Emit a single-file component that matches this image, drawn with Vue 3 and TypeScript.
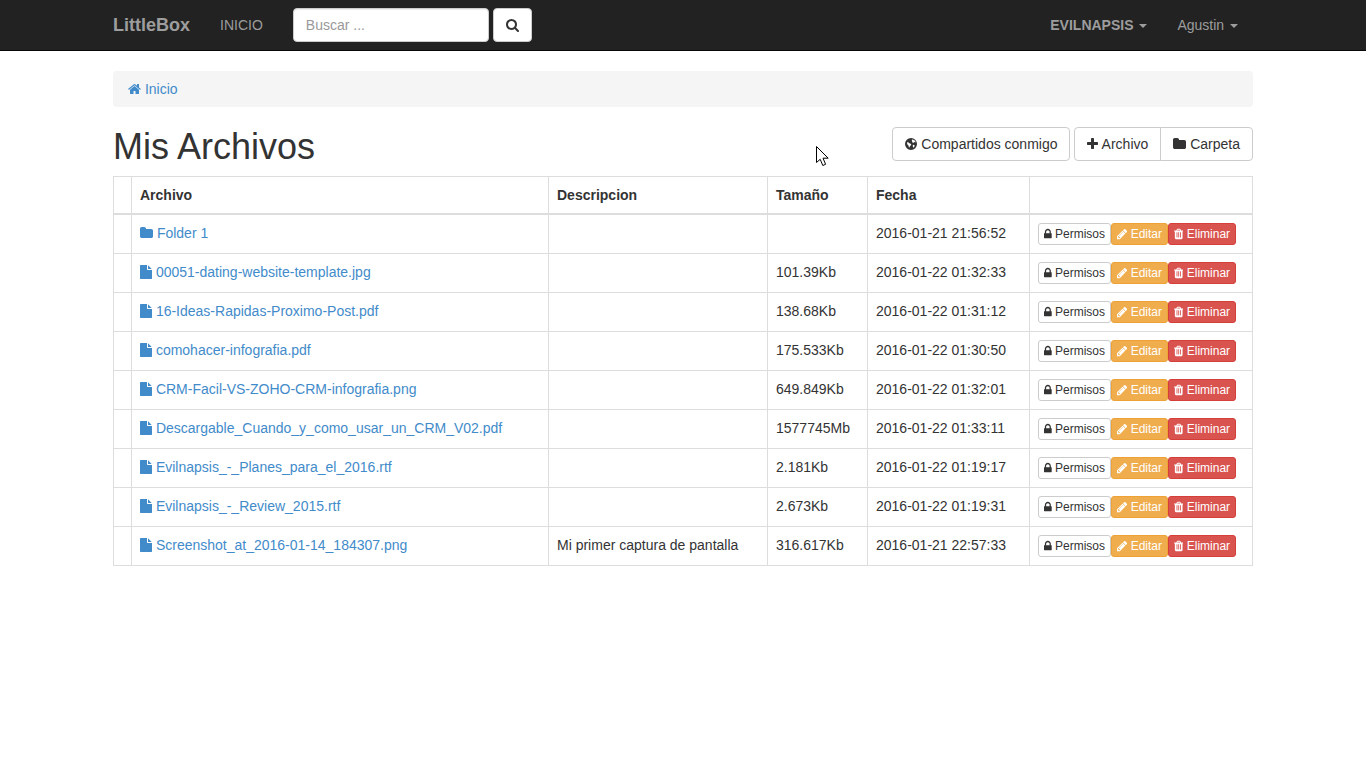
<script setup lang="ts">
import { h } from 'vue';

interface Glyph {
  x: number;
  adv: number;
  d: string;
}

const glyphs: Record<string, Glyph> = {
  home: { x: 64, adv: 1664, d: 'M1472 992v480q0 26-19 45t-45 19h-384v-384h-256v384h-384q-26 0-45-19t-19-45v-480q0-1 .5-3t.5-3l575-474 575 474q1 2 1 6zm223-69l-62 74q-8 9-21 11h-3q-13 0-21-7l-692-577-692 577q-12 8-24 7-13-2-21-11l-62-74q-8-10-7-23.500t11-21.500l719-599q32-26 76-26t76 26l244 204v-195q0-14 9-23t23-9h192q14 0 23 9t9 23v408l219 182q10 8 11 21.500t-7 23.500z' },
  search: { x: 64, adv: 1664, d: 'M1216 832q0-185-131.500-316.500t-316.500-131.500-316.500 131.500-131.500 316.500 131.500 316.500 316.500 131.500 316.500-131.500 131.500-316.500zm512 832q0 52-38 90t-90 38q-54 0-90-38l-343-342q-179 124-399 124-143 0-273.500-55.500t-225-150-150-225-55.500-273.500 55.500-273.500 150-225 225-150 273.500-55.500 273.500 55.500 225 150 150 225 55.500 273.500q0 220-124 399l343 343q37 37 37 90z' },
  plus: { x: 192, adv: 1408, d: 'M1600 736v192q0 40-28 68t-68 28h-416v416q0 40-28 68t-68 28h-192q-40 0-68-28t-28-68v-416h-416q-40 0-68-28t-28-68v-192q0-40 28-68t68-28h416v-416q0-40 28-68t68-28h192q40 0 68 28t28 68v416h416q40 0 68 28t28 68z' },
  folder: { x: 64, adv: 1664, d: 'M1728 608v704q0 92-66 158t-158 66h-1216q-92 0-158-66t-66-158v-960q0-92 66-158t158-66h320q92 0 158 66t66 158v32h672q92 0 158 66t66 158z' },
  file: { x: 128, adv: 1536, d: 'M1152 512v-472q22 14 36 28l408 408q14 14 28 36h-472zm-128 32q0 40 28 68t68 28h544v1056q0 40-28 68t-68 28h-1344q-40 0-68-28t-28-68v-1600q0-40 28-68t68-28h800v544z' },
  lock: { x: 320, adv: 1152, d: 'M640 768h512v-192q0-106-75-181t-181-75-181 75-75 181v192zm832 96v576q0 40-28 68t-68 28h-960q-40 0-68-28t-28-68v-576q0-40 28-68t68-28h32v-192q0-184 132-316t316-132 316 132 132 316v192h32q40 0 68 28t28 68z' },
  pencil: { x: 128, adv: 1536, d: 'M491 1536l91-91-235-235-91 91v107h128v128h107zm523-928q0-22-22-22-10 0-17 7l-542 542q-7 7-7 17 0 22 22 22 10 0 17-7l542-542q7-7 7-17zm-54-192l416 416-832 832h-416v-416zm683 96q0 53-37 90l-166 166-416-416 166-165q36-38 90-38 53 0 91 38l235 234q37 39 37 91z' },
  trash: { x: 192, adv: 1408, d: 'M704 1376v-704q0-14-9-23t-23-9h-64q-14 0-23 9t-9 23v704q0 14 9 23t23 9h64q14 0 23-9t9-23zm256 0v-704q0-14-9-23t-23-9h-64q-14 0-23 9t-9 23v704q0 14 9 23t23 9h64q14 0 23-9t9-23zm256 0v-704q0-14-9-23t-23-9h-64q-14 0-23 9t-9 23v704q0 14 9 23t23 9h64q14 0 23-9t9-23zm-544-992h448l-48-117q-7-9-17-11h-317q-10 2-17 11zm928 32v64q0 14-9 23t-23 9h-96v948q0 83-47 143.500t-113 60.500h-832q-66 0-113-58.500t-47-141.500v-952h-96q-14 0-23-9t-9-23v-64q0-14 9-23t23-9h309l70-167q15-37 54-63t79-26h320q40 0 79 26t54 63l70 167h309q14 0 23 9t9 23z' },
  globe: { x: 128, adv: 1536, d: 'M896 128a768 768 0 1 0 0 1536a768 768 0 1 0 0-1536zM1010 330q150 -10 300 90q130 90 190 250l-70 10q-60-50-120-30l-20 60-80 40-110-30q-30-60-60-130q-30-50-30-100zM420 640l170 60 100 100 160 50 80 110-60 120-100 60-40 150-60 60-60-60-30-190-120-120-60-130zM1130 1000l180 20 60 70-50 150-100 110-60-20-30-140z' },
};

const Fa = (props: { name: string }) => {
  const g = glyphs[props.name];
  return h(
    'svg',
    {
      class: 'fa',
      viewBox: `${g.x} 0 ${g.adv} 1792`,
      width: `${g.adv / 1792}em`,
      height: '1em',
      fill: 'currentColor',
    },
    [h('path', { d: g.d })],
  );
};
Fa.props = ['name'];

interface Entry {
  name: string;
  folder?: boolean;
  description?: string;
  size?: string;
  date: string;
}

const entries: Entry[] = [
  { name: 'Folder 1', folder: true, date: '2016-01-21 21:56:52' },
  { name: '00051-dating-website-template.jpg', size: '101.39Kb', date: '2016-01-22 01:32:33' },
  { name: '16-Ideas-Rapidas-Proximo-Post.pdf', size: '138.68Kb', date: '2016-01-22 01:31:12' },
  { name: 'comohacer-infografia.pdf', size: '175.533Kb', date: '2016-01-22 01:30:50' },
  { name: 'CRM-Facil-VS-ZOHO-CRM-infografia.png', size: '649.849Kb', date: '2016-01-22 01:32:01' },
  { name: 'Descargable_Cuando_y_como_usar_un_CRM_V02.pdf', size: '1577745Mb', date: '2016-01-22 01:33:11' },
  { name: 'Evilnapsis_-_Planes_para_el_2016.rtf', size: '2.181Kb', date: '2016-01-22 01:19:17' },
  { name: 'Evilnapsis_-_Review_2015.rtf', size: '2.673Kb', date: '2016-01-22 01:19:31' },
  {
    name: 'Screenshot_at_2016-01-14_184307.png',
    description: 'Mi primer captura de pantalla',
    size: '316.617Kb',
    date: '2016-01-21 22:57:33',
  },
];
</script>

<template>
  <div class="page">
    <nav class="navbar">
      <div class="container nav-inner">
        <a class="brand">LittleBox</a>
        <a class="nav-link">INICIO</a>
        <form class="search" @submit.prevent>
          <input class="search-input" type="text" placeholder="Buscar ..." />
          <button class="btn" type="button"><Fa name="search" /></button>
        </form>
        <div class="nav-right">
          <a class="nav-link strong">EVILNAPSIS <span class="caret"></span></a>
          <a class="nav-link">Agustin <span class="caret"></span></a>
        </div>
      </div>
    </nav>

    <main class="container">
      <div class="breadcrumb">
        <a class="link"><Fa name="home" /> Inicio</a>
      </div>

      <div class="heading">
        <h1>Mis Archivos</h1>
        <div class="toolbar">
          <a class="btn"><Fa name="globe" /> Compartidos conmigo</a>
          <div class="btn-group">
            <a class="btn"><Fa name="plus" /> Archivo</a>
            <a class="btn"><Fa name="folder" /> Carpeta</a>
          </div>
        </div>
      </div>

      <table class="files">
        <colgroup>
          <col class="c-check" />
          <col class="c-name" />
          <col class="c-desc" />
          <col class="c-size" />
          <col class="c-date" />
          <col />
        </colgroup>
        <thead>
          <tr>
            <th></th>
            <th>Archivo</th>
            <th>Descripcion</th>
            <th>Tamaño</th>
            <th>Fecha</th>
            <th></th>
          </tr>
        </thead>
        <tbody>
          <tr v-for="entry in entries" :key="entry.name">
            <td></td>
            <td>
              <a class="link"><Fa :name="entry.folder ? 'folder' : 'file'" /> {{ entry.name }}</a>
            </td>
            <td>{{ entry.description }}</td>
            <td>{{ entry.size }}</td>
            <td>{{ entry.date }}</td>
            <td class="actions">
              <a class="btn-xs plain"><Fa name="lock" /> Permisos</a>
              <a class="btn-xs warning"><Fa name="pencil" /> Editar</a>
              <a class="btn-xs danger"><Fa name="trash" /> Eliminar</a>
            </td>
          </tr>
        </tbody>
      </table>
    </main>

    <svg class="cursor" width="14" height="21" viewBox="0 0 14 21">
      <path
        d="M0.5 0.5V16.5L4.2 13.3L6.8 19.5L9.6 18.3L7 12.2H12.2Z"
        fill="#fff"
        stroke="#000"
        stroke-width="1"
        stroke-linejoin="miter"
      />
    </svg>
  </div>
</template>

<style>
html,
body {
  margin: 0;
  background: #fff;
}
</style>

<style scoped>
.page {
  position: relative;
  min-height: 768px;
  font-family: "Liberation Sans", Arial, sans-serif;
  font-size: 14px;
  line-height: 20px;
  color: #333;
}

.fa {
  vertical-align: -0.143em;
}

.container {
  width: 1140px;
  margin: 0 auto;
}

.navbar {
  height: 50px;
  background: #222;
  border-bottom: 1px solid #080808;
}

.nav-inner {
  display: flex;
  align-items: center;
  height: 50px;
}

.brand {
  font-size: 18px;
  font-weight: 700;
  color: #9d9d9d;
  margin-right: 15px;
}

.nav-link {
  padding: 0 15px;
  color: #9d9d9d;
}

.nav-link.strong {
  font-weight: 700;
}

.search {
  display: flex;
  gap: 4px;
  padding: 0 15px;
}

.search-input {
  box-sizing: border-box;
  width: 196px;
  height: 34px;
  padding: 6px 12px;
  border: 1px solid #ccc;
  border-radius: 4px;
  background: #fff;
  box-shadow: inset 0 1px 1px rgba(0, 0, 0, 0.075);
  font: inherit;
  color: #555;
  outline: none;
}

.search-input::placeholder {
  color: #999;
  opacity: 1;
}

.nav-right {
  display: flex;
  margin-left: auto;
}

.caret {
  display: inline-block;
  width: 0;
  height: 0;
  margin-left: 2px;
  vertical-align: middle;
  border-top: 4px solid;
  border-left: 4px solid transparent;
  border-right: 4px solid transparent;
}

.btn {
  box-sizing: border-box;
  display: inline-block;
  height: 34px;
  padding: 6px 12px;
  border: 1px solid #ccc;
  border-radius: 4px;
  background: #fff;
  color: #333;
  font: inherit;
  white-space: nowrap;
}

.breadcrumb {
  margin: 20px 0;
  padding: 8px 15px;
  background: #f5f5f5;
  border-radius: 4px;
}

.link {
  color: #428bca;
}

.heading {
  display: flex;
  justify-content: space-between;
  align-items: flex-start;
}

h1 {
  margin: 0 0 9px;
  font-size: 36px;
  font-weight: 500;
  line-height: 40px;
}

.toolbar {
  display: flex;
  gap: 4px;
}

.btn-group {
  display: flex;
}

.btn-group .btn:first-child {
  border-radius: 4px 0 0 4px;
}

.btn-group .btn:last-child {
  margin-left: -1px;
  border-radius: 0 4px 4px 0;
}

.files {
  width: 1140px;
  table-layout: fixed;
  border-collapse: collapse;
}

.c-check {
  width: 18px;
}

.c-name {
  width: 417px;
}

.c-desc {
  width: 219px;
}

.c-size {
  width: 100px;
}

.c-date {
  width: 162px;
}

th,
td {
  padding: 8px;
  border: 1px solid #ddd;
  text-align: left;
  vertical-align: top;
}

th {
  font-weight: 700;
  border-bottom-width: 2px;
}

.actions {
  white-space: nowrap;
}

.btn-xs {
  display: inline-block;
  padding: 1px 5px;
  border: 1px solid #ccc;
  border-radius: 3px;
  font-size: 12px;
  line-height: 18px;
}

.plain {
  background: #fff;
  color: #333;
}

.warning {
  background: #f0ad4e;
  border-color: #eea236;
  color: #fff;
}

.danger {
  background: #d9534f;
  border-color: #d43f3a;
  color: #fff;
}

.cursor {
  position: absolute;
  left: 816px;
  top: 146px;
}
</style>
